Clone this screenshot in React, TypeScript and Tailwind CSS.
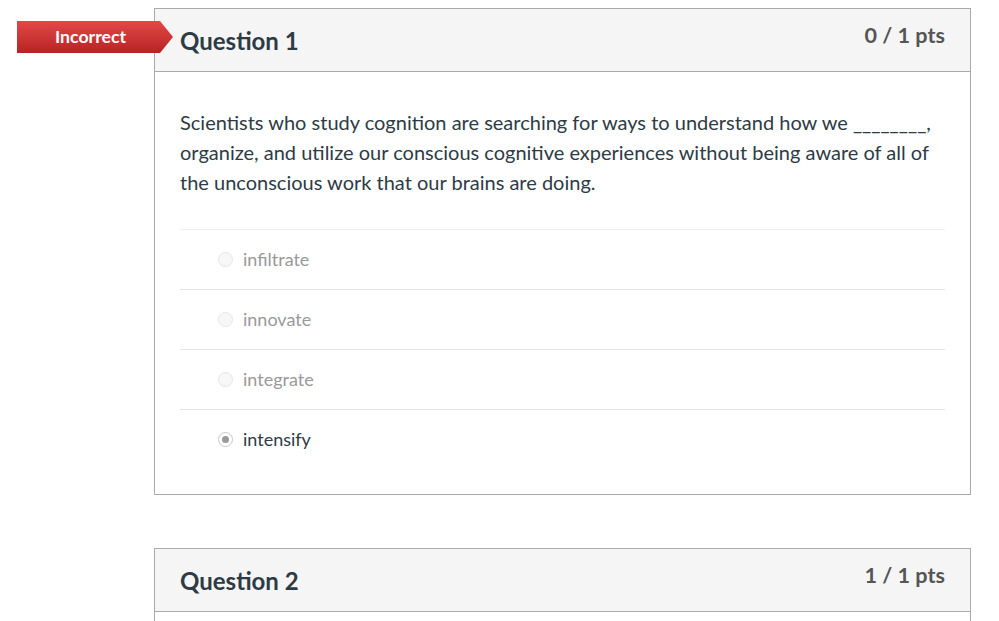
const answers = [
  { text: "infiltrate", selected: false },
  { text: "innovate", selected: false },
  { text: "integrate", selected: false },
  { text: "intensify", selected: true },
];

const Radio = ({ selected }: { selected: boolean }) => (
  <span
    className={
      "flex h-[15px] w-[15px] shrink-0 items-center justify-center rounded-full border " +
      (selected ? "border-[#c8c8c8] bg-white" : "border-[#e6e6e6] bg-[#f7f7f7]")
    }
  >
    {selected && <span className="h-[7px] w-[7px] rounded-full bg-[#9a9a9a]" />}
  </span>
);

const Header = ({ title, pts }: { title: string; pts: string }) => (
  <div className="flex h-[63px] justify-between border-b border-[#aaaaaa] bg-[#f5f5f5] px-[25px]">
    <h2 className="pt-[17px] text-[24px] font-bold leading-[30px] text-[#2d3b45]">{title}</h2>
    <span className="pt-[13px] text-[21.6px] font-bold leading-[26px] text-[#555555]">{pts}</span>
  </div>
);

export default function App() {
  return (
    <div className="relative h-[621px] overflow-hidden bg-white pt-[8px] pl-[154px] font-['Lato','Liberation_Sans',sans-serif]">
      <div className="absolute left-[17px] top-[21px] z-10 flex h-[32px] w-[156px] items-center bg-gradient-to-b from-[#e34848] to-[#b72222] pl-[38px] text-[17.7px] font-bold text-white [clip-path:polygon(0_0,143px_0,156px_50%,143px_100%,0_100%)]">
        Incorrect
      </div>

      <div className="w-[817px] border border-[#aaaaaa] bg-white">
        <Header title="Question 1" pts="0 / 1 pts" />
        <div className="px-[25px] pt-[35px] pb-[25px]">
          <p className="text-[20px] leading-[30px] text-[#2d3b45]">
            Scientists who study cognition are searching for ways to understand how we ________,
            organize, and utilize our conscious cognitive experiences without being aware of all of
            the unconscious work that our brains are doing.
          </p>
          <div className="mt-[32px]">
            {answers.map((a, i) => (
              <div
                key={a.text}
                className={
                  "flex h-[60px] items-center gap-[10px] pl-[38px] " +
                  (i > 0 ? "border-t border-[#e4e4e4]" : "border-t border-[#eeeeee]")
                }
              >
                <Radio selected={a.selected} />
                <span
                  className={
                    "text-[18px] " + (a.selected ? "text-[#2d3b45]" : "text-[#999999]")
                  }
                >
                  {a.text}
                </span>
              </div>
            ))}
          </div>
        </div>
      </div>

      <div className="mt-[53px] w-[817px] border border-[#aaaaaa] bg-white">
        <Header title="Question 2" pts="1 / 1 pts" />
        <div className="h-[40px]" />
      </div>
    </div>
  );
}
